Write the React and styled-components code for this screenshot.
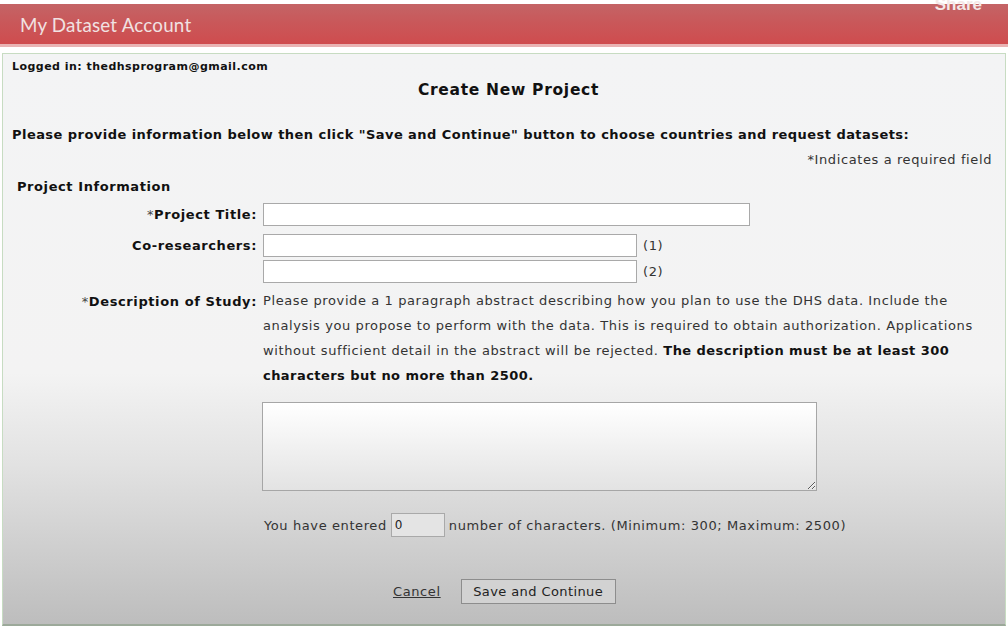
import React from 'react'
import styled, { createGlobalStyle } from 'styled-components'

const Global = createGlobalStyle`
  body {
    margin: 0;
    background: #ffffff;
    font-family: "DejaVu Sans", Verdana, sans-serif;
  }
`

const Page = styled.div`
  padding-top: 4px;
  width: 1008px;
  height: 632px;
  overflow: hidden;
`

const Header = styled.header`
  height: 40px;
  display: flex;
  justify-content: space-between;
  align-items: center;
  padding: 0 26px 0 20px;
  background: linear-gradient(to bottom, #c46466 0%, #c9585a 45%, #cf4c4e 100%);
  border-bottom: 3px solid #e9b3b3;
`

const Brand = styled.div`
  font-family: Lato, "Open Sans", sans-serif;
  font-size: 18.8px;
  color: #f1e2e2;
  letter-spacing: 0.2px;
`

const Share = styled.a`
  align-self: flex-start;
  margin-top: -9px;
  font-family: "Liberation Sans", Arial, sans-serif;
  font-weight: bold;
  font-size: 17px;
  color: #f4e8e8;
`

const Panel = styled.main`
  margin: 6px 2px 0 2px;
  height: 573px;
  box-sizing: border-box;
  border: 1px solid #c7dcc2;
  border-bottom: 2px solid #9ca99a;
  background: linear-gradient(to bottom, #f3f4f5 0%, #f3f3f3 56%, #e2e2e2 72%, #bdbdbd 100%);
  padding: 6px 0 0 9px;
  color: #222;
  font-size: 13px;
  letter-spacing: 0.6px;
`

const Logged = styled.div`
  font-size: 11px;
  font-weight: bold;
  letter-spacing: 0.47px;
  color: #111;
`

const Title = styled.h1`
  margin: 8px 0 0 0;
  font-size: 15.5px;
  font-weight: bold;
  letter-spacing: 0.7px;
  text-align: center;
  color: #111;
`

const Intro = styled.p`
  margin: 28px 0 0 0;
  font-size: 13px;
  font-weight: bold;
  letter-spacing: 0.45px;
  color: #111;
`

const Required = styled.div`
  margin-top: 10px;
  padding-right: 13px;
  text-align: right;
  color: #333;
`

const Section = styled.h2`
  margin: 12px 0 0 5px;
  font-size: 13px;
  font-weight: bold;
  letter-spacing: 0.58px;
  color: #111;
`

const Row = styled.div`
  display: grid;
  grid-template-columns: 245px 1fr;
  column-gap: 6px;
  align-items: ${p => (p.top ? 'start' : 'center')};
  margin-top: ${p => p.gap || 0}px;
`

const Label = styled.label`
  text-align: right;
  font-weight: bold;
  color: #111;
`

const Star = styled.span`
  font-weight: normal;
  color: #444;
`

const Field = styled.div`
  display: flex;
  align-items: center;
  gap: 6px;
  color: #333;
`

const Input = styled.input`
  box-sizing: border-box;
  width: ${p => p.w}px;
  height: ${p => p.h || 23}px;
  border: 1px solid #a9a9a9;
  background: ${p => p.bg || '#ffffff'};
  padding: 0 3px;
  font-family: inherit;
  font-size: 12px;
  color: #222;
`

const Para = styled.p`
  margin: -6px 0 0 0;
  line-height: 25px;
  color: #333;

  b {
    color: #111;
    letter-spacing: 0.45px;
  }
`

const Area = styled.textarea`
  display: block;
  box-sizing: border-box;
  width: 555px;
  height: 89px;
  margin: 14px 0 0 250px;
  border: 1px solid #a6a6a6;
  background: linear-gradient(to bottom, #ffffff, #e3e3e3);
  resize: both;
`

const Count = styled.div`
  display: flex;
  align-items: center;
  gap: 4px;
  margin: 22px 0 0 252px;
  color: #333;
`

const Actions = styled.div`
  display: flex;
  align-items: center;
  gap: 20px;
  margin: 42px 0 0 381px;
`

const Cancel = styled.a`
  color: #333;
  text-decoration: underline;
`

const Button = styled.button`
  width: 155px;
  height: 25px;
  border: 1px solid #8d8d8d;
  background: #d2d2d2;
  font-family: inherit;
  font-size: 13px;
  letter-spacing: 0.4px;
  color: #222;
`

export default function App () {
  return (
    <Page>
      <Global />
      <Header>
        <Brand>My Dataset Account</Brand>
        <Share>Share</Share>
      </Header>
      <Panel>
        <Logged>Logged in: thedhsprogram@gmail.com</Logged>
        <Title>Create New Project</Title>
        <Intro>
          Please provide information below then click "Save and Continue" button to choose countries and request datasets:
        </Intro>
        <Required>*Indicates a required field</Required>
        <Section>Project Information</Section>

        <Row gap={9}>
          <Label><Star>*</Star>Project Title:</Label>
          <Field><Input w={487} /></Field>
        </Row>
        <Row gap={8}>
          <Label>Co-researchers:</Label>
          <Field><Input w={374} />(1)</Field>
        </Row>
        <Row gap={3}>
          <span />
          <Field><Input w={374} />(2)</Field>
        </Row>

        <Row gap={11} top>
          <Label><Star>*</Star>Description of Study:</Label>
          <Para>
            Please provide a 1 paragraph abstract describing how you plan to use the DHS data. Include the<br />
            analysis you propose to perform with the data. This is required to obtain authorization. Applications<br />
            without sufficient detail in the abstract will be rejected. <b>The description must be at least 300<br />
            characters but no more than 2500.</b>
          </Para>
        </Row>

        <Area />

        <Count>
          You have entered <Input w={54} h={24} bg='#e4e4e4' defaultValue='0' /> number of characters. (Minimum: 300; Maximum: 2500)
        </Count>

        <Actions>
          <Cancel href='#'>Cancel</Cancel>
          <Button>Save and Continue</Button>
        </Actions>
      </Panel>
    </Page>
  )
}
